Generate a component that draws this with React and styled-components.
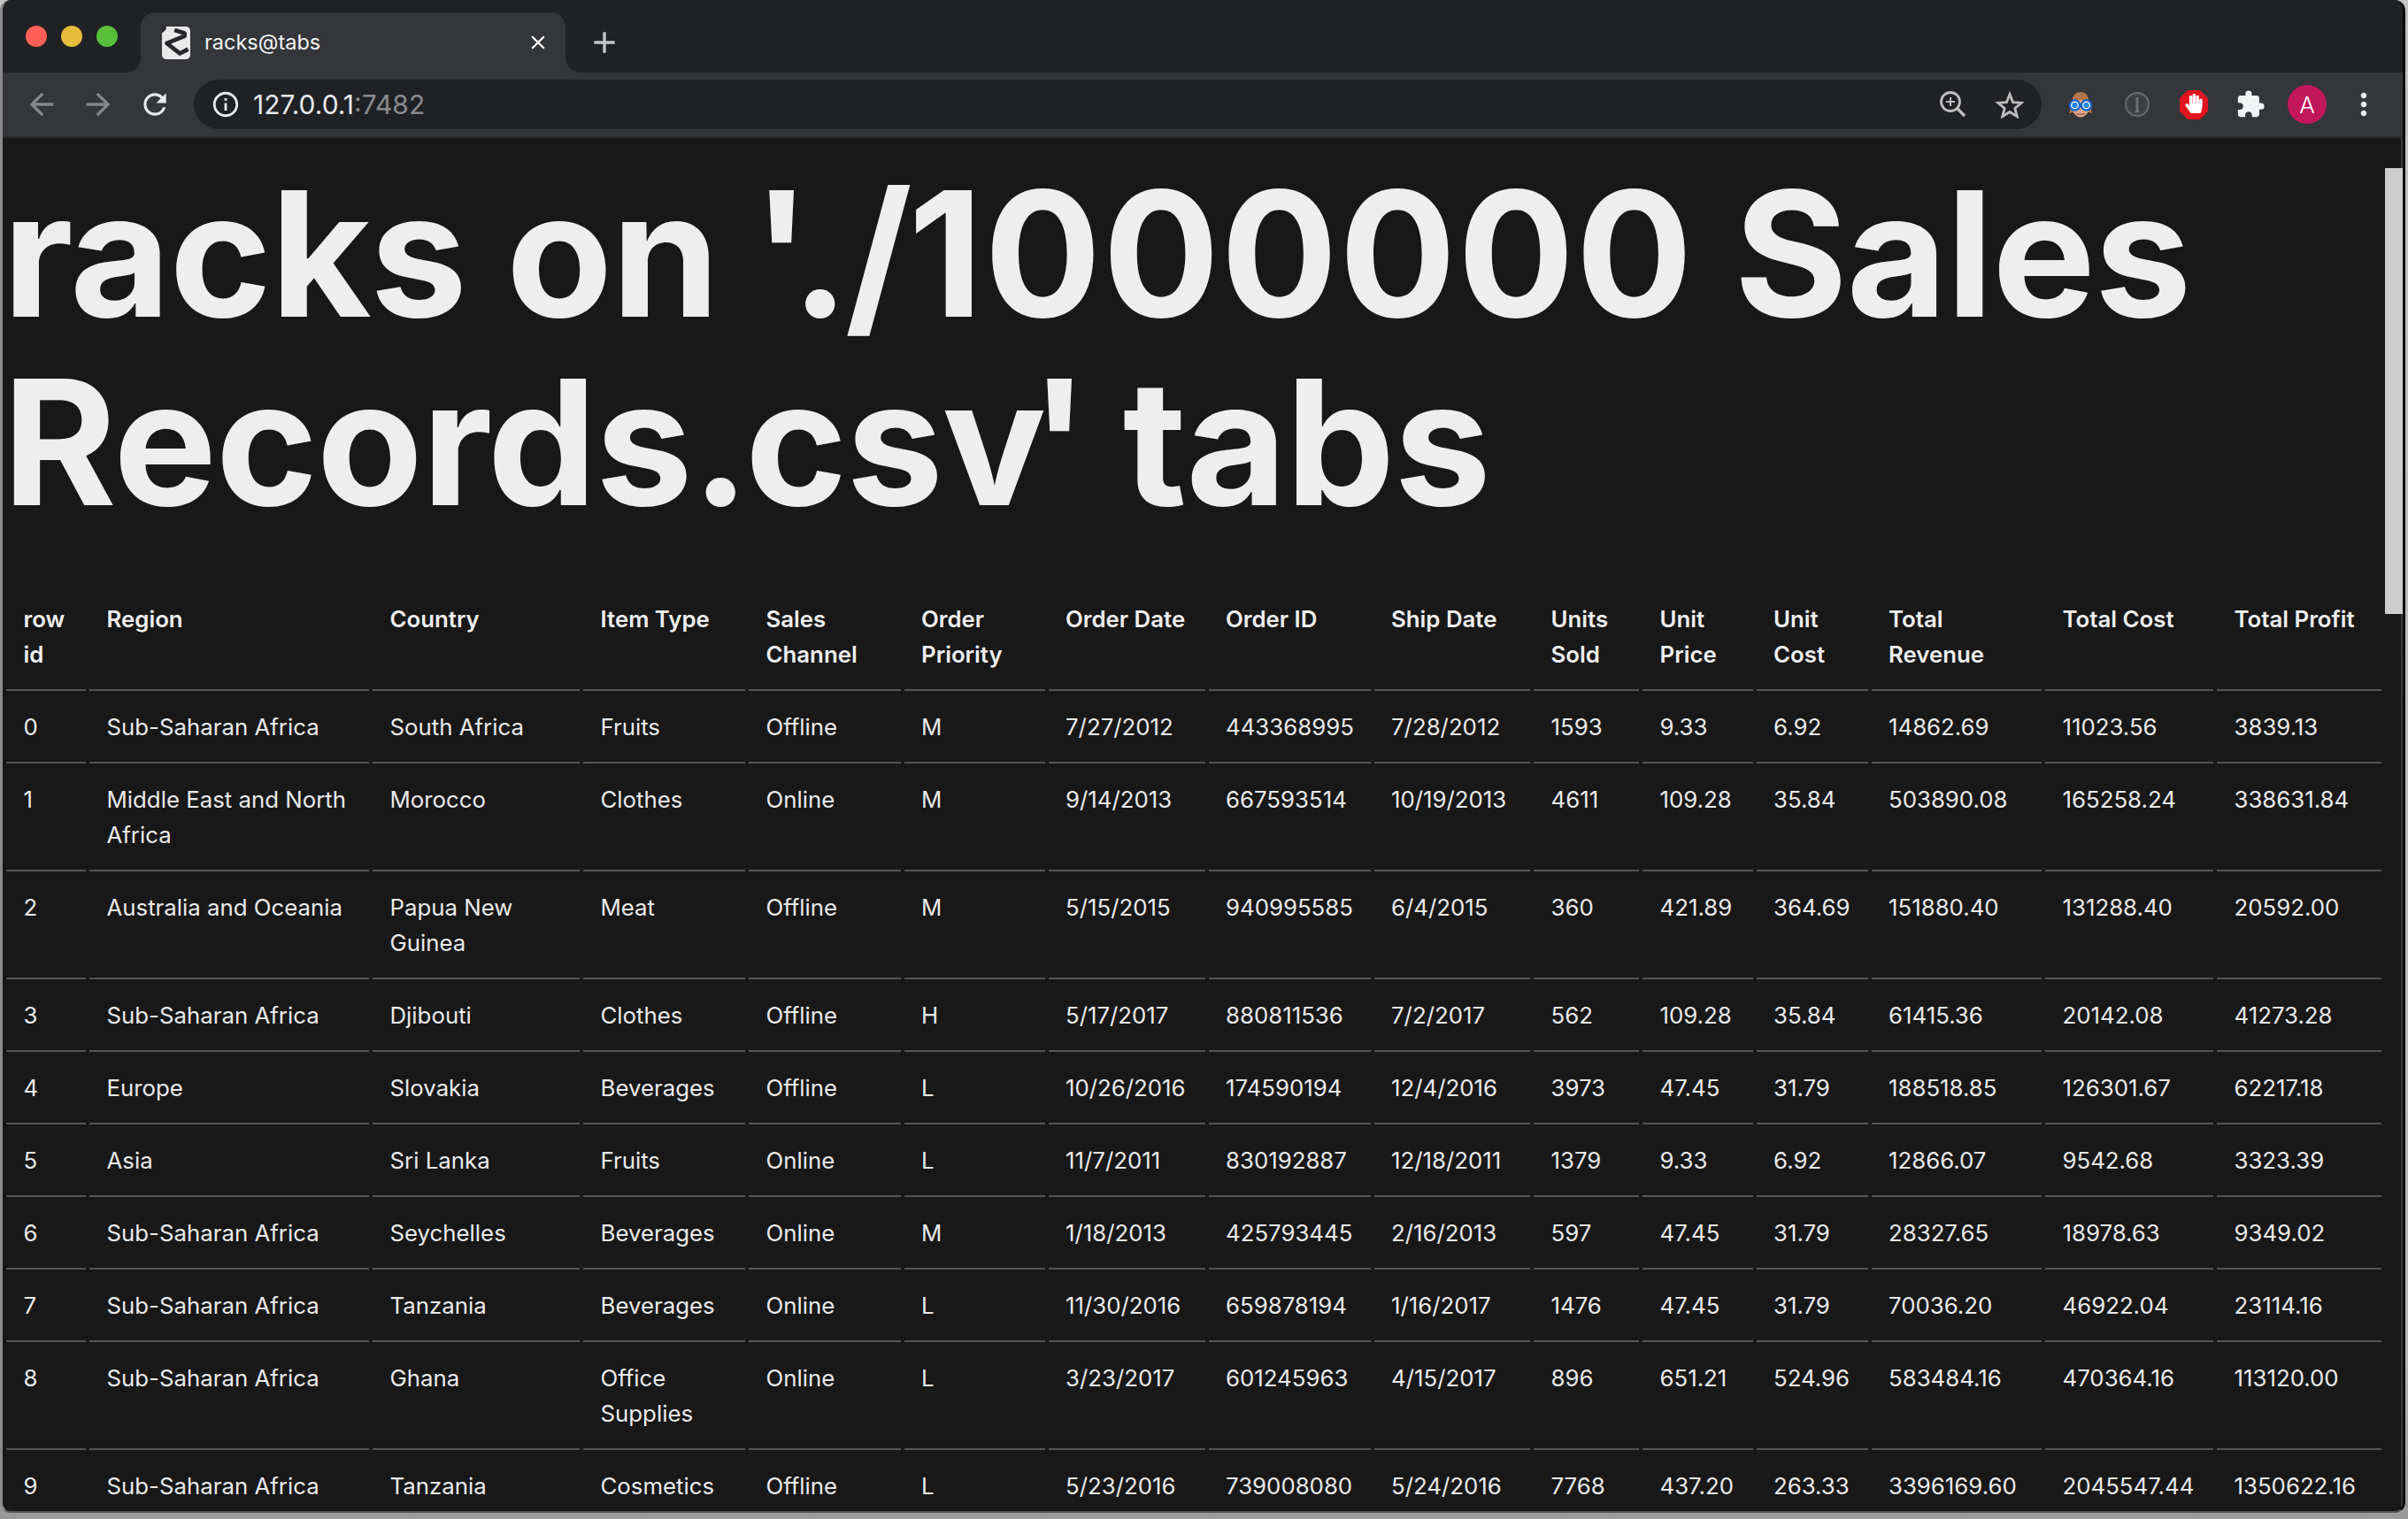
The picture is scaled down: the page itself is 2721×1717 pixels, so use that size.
import React from "react";
import styled, { createGlobalStyle } from "styled-components";
import { MdArrowBack, MdArrowForward, MdRefresh, MdInfoOutline, MdExtension, MdMoreVert, MdClose, MdAdd } from "react-icons/md";
import { FaHandPaper } from "react-icons/fa";

const Global = createGlobalStyle`
  html, body { margin: 0; padding: 0; overflow: hidden; background: #b4b4b4; }
  * { box-sizing: border-box; }
`;

const Desktop = styled.div`
  width: 2721px; height: 1717px; padding: 0 3px 7px 0;
  background: linear-gradient(180deg, #c4c4c4 0%, #b4b4b4 90%, #9a9a9a 100%);
  font-family: Inter, "Liberation Sans", sans-serif;
`;
const Window = styled.div`
  height: 100%; display: flex; flex-direction: column; overflow: hidden;
  border-left: 3px solid #8a8a8a; border-right: 3px solid #0c0c0c; border-bottom: 2px solid #555;
  border-radius: 12px; background: #181818;
`;
const TitleBar = styled.div`
  height: 82px; flex: none; display: flex; align-items: flex-end; background: #202124;
`;
const Lights = styled.div`
  width: 156px; height: 82px; padding-left: 26px; display: flex; align-items: center; gap: 16px; padding-bottom: 0;
`;
const Light = styled.span`
  width: 24px; height: 24px; border-radius: 50%; background: ${p => p.$color};
`;
const Tab = styled.div`
  position: relative; width: 480px; height: 68px; padding: 0 14px 0 24px;
  display: flex; align-items: center; gap: 16px;
  background: #35363a; border-radius: 16px 16px 0 0; color: #f1f3f4; font-size: 23.5px;
  &::before, &::after {
    content: ""; position: absolute; bottom: 0; width: 16px; height: 16px;
  }
  &::before { left: -16px; background: radial-gradient(circle at 0 0, transparent 15.5px, #35363a 16px); }
  &::after { right: -16px; background: radial-gradient(circle at 100% 0, transparent 15.5px, #35363a 16px); }
`;
const TabTitle = styled.span`
  flex: 1; margin-top: -1px;
`;
const TabClose = styled.span`
  display: flex; color: #fff; margin-right: 4px;
`;
const NewTab = styled.span`
  display: flex; margin-left: 24px; margin-bottom: 14px; color: #c4c6c9;
`;
const Toolbar = styled.div`
  height: 74px; flex: none; display: flex; align-items: flex-start; padding: 8px 12px 0 12px;
  background: #35363a; border-bottom: 2px solid #2b2c2e;
`;
const Slot = styled.span`
  flex: none; width: ${p => p.$w || 64}px; height: 56px; display: flex; align-items: center; justify-content: center;
  color: ${p => p.$color || "#dadce0"};
`;
const Address = styled.div`
  flex: 1; height: 56px; margin: 0 12px 0 12px; padding: 0 4px 0 4px; display: flex; align-items: center;
  background: #202124; border-radius: 28px; color: #e8eaed; font-size: 30px;
`;
const Host = styled.span`
  flex: 1; margin-left: -1px;
`;
const Port = styled.span`
  color: #8a8c8f;
`;
const Avatar = styled.span`
  width: 44px; height: 44px; border-radius: 50%; background: #c2185b; color: #fff; font-size: 26px; font-weight: 300;
  display: flex; align-items: center; justify-content: center;
`;
const Page = styled.div`
  flex: 1; min-height: 0; display: flex; background: #181818;
`;
const Content = styled.main`
  flex: 1; min-width: 0; overflow: hidden; padding-top: 24px; color: #eee;
`;
const Rail = styled.div`
  flex: none; width: 20px; background: #181818; border-right: 2px solid #3a3a3a;
`;
const Thumb = styled.div`
  width: 20px; height: 504px; margin-top: 34px; background: #cdcdcd;
`;
const Heading = styled.h1`
  margin: 0 0 53px; font-size: 196px; line-height: 213px; font-weight: 700; color: #eee; letter-spacing: -1.2px;
`;
const Punct = styled.span`
  letter-spacing: ${p => p.$ls}px;
  margin-left: ${p => p.$ml || 0}px;
`;
const Digits = styled.span`
  letter-spacing: 1.5px;
`;
const Table = styled.table`
  width: 2692px; table-layout: fixed; border-collapse: separate; border-spacing: 4px 0;
  font-size: 25.8px; line-height: 40px;
`;
const Th = styled.th`
  text-align: left; vertical-align: top; font-weight: 600; padding: 21px 10px 19px 19.5px; border-bottom: 2px solid #555;
`;
const Td = styled.td`
  vertical-align: top; font-weight: 400; color: #eaeaea; padding: 21px 10px 19px 19.5px; border-bottom: 2px solid #555;
`;

const cols = [90, 316, 234, 183, 171.5, 159, 177, 183, 176.5, 119, 124.5, 126, 192.5, 190, 186];
const head = ["row id", "Region", "Country", "Item Type", "Sales Channel", "Order Priority", "Order Date", "Order ID", "Ship Date", "Units Sold", "Unit Price", "Unit Cost", "Total Revenue", "Total Cost", "Total Profit"];
const rows = [
  ["0", "Sub-Saharan Africa", "South Africa", "Fruits", "Offline", "M", "7/27/2012", "443368995", "7/28/2012", "1593", "9.33", "6.92", "14862.69", "11023.56", "3839.13"],
  ["1", "Middle East and North Africa", "Morocco", "Clothes", "Online", "M", "9/14/2013", "667593514", "10/19/2013", "4611", "109.28", "35.84", "503890.08", "165258.24", "338631.84"],
  ["2", "Australia and Oceania", "Papua New Guinea", "Meat", "Offline", "M", "5/15/2015", "940995585", "6/4/2015", "360", "421.89", "364.69", "151880.40", "131288.40", "20592.00"],
  ["3", "Sub-Saharan Africa", "Djibouti", "Clothes", "Offline", "H", "5/17/2017", "880811536", "7/2/2017", "562", "109.28", "35.84", "61415.36", "20142.08", "41273.28"],
  ["4", "Europe", "Slovakia", "Beverages", "Offline", "L", "10/26/2016", "174590194", "12/4/2016", "3973", "47.45", "31.79", "188518.85", "126301.67", "62217.18"],
  ["5", "Asia", "Sri Lanka", "Fruits", "Online", "L", "11/7/2011", "830192887", "12/18/2011", "1379", "9.33", "6.92", "12866.07", "9542.68", "3323.39"],
  ["6", "Sub-Saharan Africa", "Seychelles", "Beverages", "Online", "M", "1/18/2013", "425793445", "2/16/2013", "597", "47.45", "31.79", "28327.65", "18978.63", "9349.02"],
  ["7", "Sub-Saharan Africa", "Tanzania", "Beverages", "Online", "L", "11/30/2016", "659878194", "1/16/2017", "1476", "47.45", "31.79", "70036.20", "46922.04", "23114.16"],
  ["8", "Sub-Saharan Africa", "Ghana", "Office Supplies", "Online", "L", "3/23/2017", "601245963", "4/15/2017", "896", "651.21", "524.96", "583484.16", "470364.16", "113120.00"],
  ["9", "Sub-Saharan Africa", "Tanzania", "Cosmetics", "Offline", "L", "5/23/2016", "739008080", "5/24/2016", "7768", "437.20", "263.33", "3396169.60", "2045547.44", "1350622.16"],
];

const Favicon = () => (
  <svg width="32" height="37" viewBox="40 20 95 110">
    <rect x="40" y="20" width="95" height="110" rx="14" fill="#e9e9e9" />
    <path d="M40 20h14v10l-14 12z" fill="#26272b" />
    <path d="M82 32 L116 42 V52 L56 76 L100 110 L128 96" fill="none" stroke="#26272b" strokeWidth="14" strokeLinejoin="round" />
  </svg>
);
const ZoomGlass = () => (
  <svg width="30" height="30" viewBox="0 0 30 30" fill="none" stroke="#bdbdbd" strokeWidth="2.8">
    <circle cx="12" cy="12" r="10.5" />
    <path d="M12 7v10M7 12h10" strokeWidth="2" />
    <path d="M20 20l8 8" strokeWidth="3.4" />
  </svg>
);
const Star = () => (
  <svg width="32" height="31" viewBox="0 0 32 31">
    <polygon points="16,3.5 19.6,12.6 29.2,13.2 21.8,19.4 24.2,28.6 16,23.5 7.8,28.6 10.2,19.4 2.8,13.2 12.4,12.6" fill="none" stroke="#bdbdbd" strokeWidth="2.8" strokeLinejoin="miter" />
  </svg>
);
const Nerd = () => (
  <svg width="28" height="30" viewBox="0 0 30 32">
    <path d="M5 13C5 4 10 1 15 1s10 3 10 12l4 14-6-2H7l-6 2z" fill="#b0754b" />
    <ellipse cx="15" cy="21" rx="9.5" ry="10.5" fill="#e3a98b" />
    <path d="M10 27q5 2.5 10 0" stroke="#a1685a" strokeWidth="2" fill="none" />
    <circle cx="8" cy="17" r="6" fill="#fff" stroke="#1565c8" strokeWidth="2.5" />
    <circle cx="22" cy="17" r="6" fill="#fff" stroke="#1565c8" strokeWidth="2.5" />
    <path d="M13 17h4" stroke="#1565c8" strokeWidth="2.5" />
    <circle cx="8" cy="17" r="3.4" fill="#1e88e5" />
    <circle cx="22" cy="17" r="3.4" fill="#1e88e5" />
  </svg>
);
const OnePass = () => (
  <svg width="30" height="30" viewBox="0 0 30 30">
    <circle cx="15" cy="15" r="13" fill="#3c3d40" stroke="#6a6b6d" strokeWidth="2" />
    <circle cx="15" cy="15" r="10.5" fill="none" stroke="#4c4d50" strokeWidth="1" />
    <path d="M13.5 7h3v6l-1 1 1 1v7h1v2h-5v-2h1z" fill="#6e6f71" />
  </svg>
);
const AdBlock = () => (
  <svg width="32" height="33" viewBox="0 0 32 33">
    <polygon points="9,0 23,0 32,9 32,24 23,33 9,33 0,24 0,9" fill="#e0141e" />
    <FaHandPaper x="5" y="4" size="22" color="#fff" />
  </svg>
);

export default function App() {
  return (
    <Desktop>
      <Global />
      <Window>
        <TitleBar>
          <Lights>
            <Light $color="#ff5f57" />
            <Light $color="#e5bc3c" />
            <Light $color="#58bf3a" />
          </Lights>
          <Tab>
            <Favicon />
            <TabTitle>racks@tabs</TabTitle>
            <TabClose><MdClose size={26} /></TabClose>
          </Tab>
          <NewTab><MdAdd size={40} /></NewTab>
        </TitleBar>
        <Toolbar>
          <Slot $color="#85878a"><MdArrowBack size={40} /></Slot>
          <Slot $color="#85878a"><MdArrowForward size={40} /></Slot>
          <Slot $color="#e8eaed"><MdRefresh size={38} /></Slot>
          <Address>
            <Slot $color="#e8eaed" $w={64}><MdInfoOutline size={34} /></Slot>
            <Host>127.0.0.1<Port>:7482</Port></Host>
            <Slot><ZoomGlass /></Slot>
            <Slot><Star /></Slot>
          </Address>
          <Slot><Nerd /></Slot>
          <Slot><OnePass /></Slot>
          <Slot><AdBlock /></Slot>
          <Slot $color="#f1f3f4"><MdExtension size={34} /></Slot>
          <Slot><Avatar>A</Avatar></Slot>
          <Slot $color="#e8eaed"><MdMoreVert size={40} /></Slot>
        </Toolbar>
        <Page>
          <Content>
            <Heading>
              racks on <Punct $ml={-7} $ls={-4.7}>'./</Punct><Digits>1000000</Digits> Sales Records<Punct $ls={-5}>.</Punct>csv<Punct $ml={-17} $ls={-7}>'</Punct> tabs
            </Heading>
            <Table>
              <colgroup>{cols.map((w, i) => <col key={i} width={w} />)}</colgroup>
              <thead>
                <tr>{head.map(h => <Th key={h}>{h}</Th>)}</tr>
              </thead>
              <tbody>
                {rows.map(r => <tr key={r[0]}>{r.map((c, i) => <Td key={i}>{c}</Td>)}</tr>)}
              </tbody>
            </Table>
          </Content>
          <Rail><Thumb /></Rail>
        </Page>
      </Window>
    </Desktop>
  );
}
